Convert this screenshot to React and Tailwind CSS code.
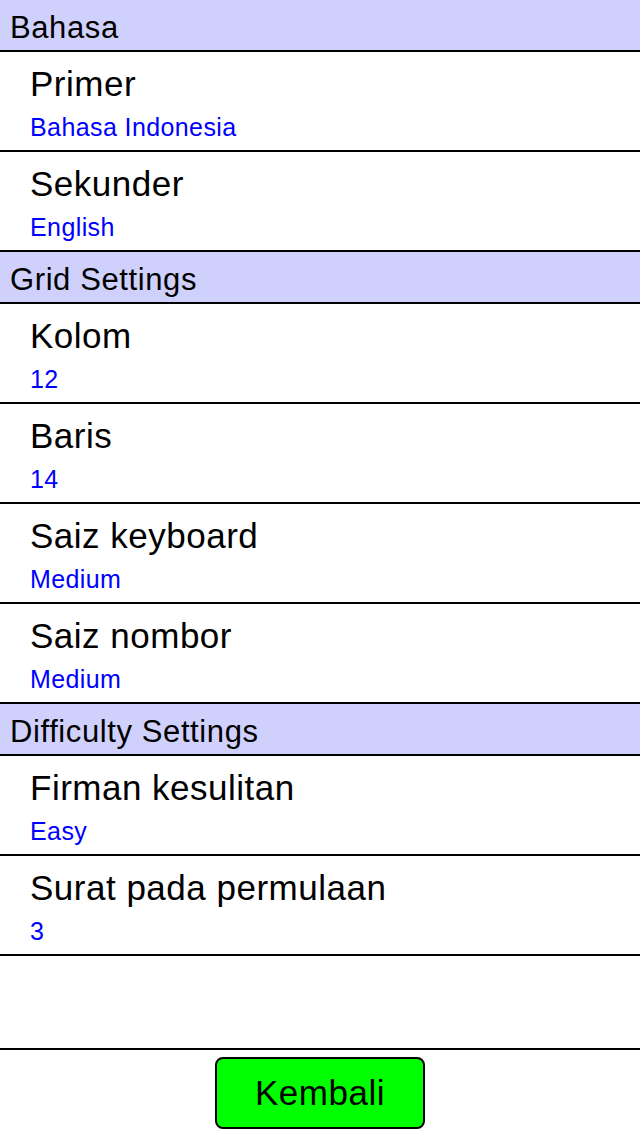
import React from "react";

const font = { fontFamily: '"Liberation Sans", Arial, sans-serif' };

function Header({ children }) {
  return (
    <div className="h-[52px] bg-[#d0d0fc] border-b-2 border-black pl-[10px] text-[31px] leading-[56px] tracking-[0.6px] text-black">
      {children}
    </div>
  );
}

function Item({ title, value }) {
  return (
    <div className="h-[100px] border-b-2 border-black pl-[30px] pt-[12px]">
      <div className="text-[35px] leading-[40px] tracking-[0.5px] text-black">{title}</div>
      <div className="mt-[8px] text-[25px] leading-[30px] tracking-[0.4px] text-[#0000ff]">{value}</div>
    </div>
  );
}

export default function App() {
  return (
    <div className="w-[640px] h-[1136px] bg-white flex flex-col overflow-hidden" style={font}>
      <Header>Bahasa</Header>
      <Item title="Primer" value="Bahasa Indonesia" />
      <Item title="Sekunder" value="English" />
      <Header>Grid Settings</Header>
      <Item title="Kolom" value="12" />
      <Item title="Baris" value="14" />
      <Item title="Saiz keyboard" value="Medium" />
      <Item title="Saiz nombor" value="Medium" />
      <Header>Difficulty Settings</Header>
      <Item title="Firman kesulitan" value="Easy" />
      <Item title="Surat pada permulaan" value="3" />
      <div className="h-[92px]" />
      <div className="flex-1 border-t-2 border-black flex items-center justify-center">
        <button className="w-[210px] h-[72px] bg-[#00ff00] border-2 border-black rounded-[8px] text-[35px] leading-[68px] tracking-[0.5px] text-black">
          Kembali
        </button>
      </div>
    </div>
  );
}
